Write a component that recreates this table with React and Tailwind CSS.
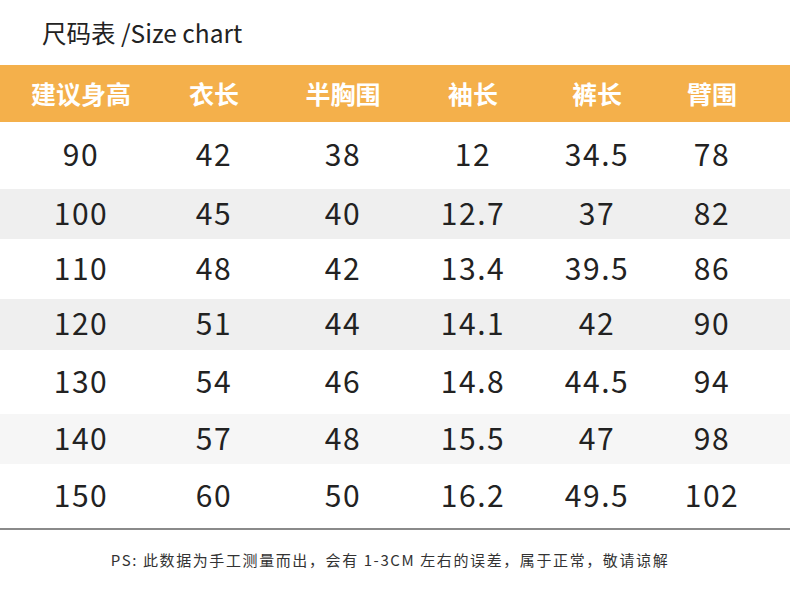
const headers = ['建议身高', '衣长', '半胸围', '袖长', '裤长', '臂围'];

const rows = [
    { h: 'h-[67px]', bg: 'bg-white', cells: ['90', '42', '38', '12', '34.5', '78'] },
    { h: 'h-[50px]', bg: 'bg-[#efefef]', cells: ['100', '45', '40', '12.7', '37', '82'] },
    { h: 'h-[60px]', bg: 'bg-white', cells: ['110', '48', '42', '13.4', '39.5', '86'] },
    { h: 'h-[51px]', bg: 'bg-[#efefef]', cells: ['120', '51', '44', '14.1', '42', '90'] },
    { h: 'h-[64px]', bg: 'bg-white', cells: ['130', '54', '46', '14.8', '44.5', '94'] },
    { h: 'h-[50px]', bg: 'bg-[#f6f6f6]', cells: ['140', '57', '48', '15.5', '47', '98'] },
    { h: 'h-[64px]', bg: 'bg-white', cells: ['150', '60', '50', '16.2', '49.5', '102'] },
];

const cols = 'grid grid-cols-[162px_104px_154px_106px_142px_88px_1fr]';

const App = () => {
    return (
        <div className="w-[790px] h-[611px] bg-white text-[#222] font-['Noto_Sans_CJK_SC','Noto_Sans',sans-serif] overflow-hidden">
            {/* Title */}
            <div className="h-[65px] flex items-center pl-[42px] pt-[2px] text-[24.5px] leading-none">
                尺码表 /Size chart
            </div>

            {/* Header band */}
            <div className={`${cols} h-[57px] items-center bg-[#f4b04b] text-white text-[25px] font-bold`}>
                {headers.map((h) => (
                    <div key={h} className="text-center leading-none">{h}</div>
                ))}
                <div />
            </div>

            {/* Body */}
            {rows.map((r, i) => (
                <div key={i} className={`${cols} ${r.h} ${r.bg} items-center text-[30px]`}>
                    {r.cells.map((c, j) => (
                        <div key={j} className="text-center leading-none tracking-[1.5px] pb-[5px]">{c}</div>
                    ))}
                    <div />
                </div>
            ))}
            <div className="h-[2px] bg-[#8a8a8a]" />

            {/* Footnote */}
            <div className="pt-[22px] text-center text-[15px] tracking-[1.6px] text-[#333] leading-none pr-[10px]">
                PS: 此数据为手工测量而出，会有 1-3CM 左右的误差，属于正常，敬请谅解
            </div>
        </div>
    );
};

export default App;
